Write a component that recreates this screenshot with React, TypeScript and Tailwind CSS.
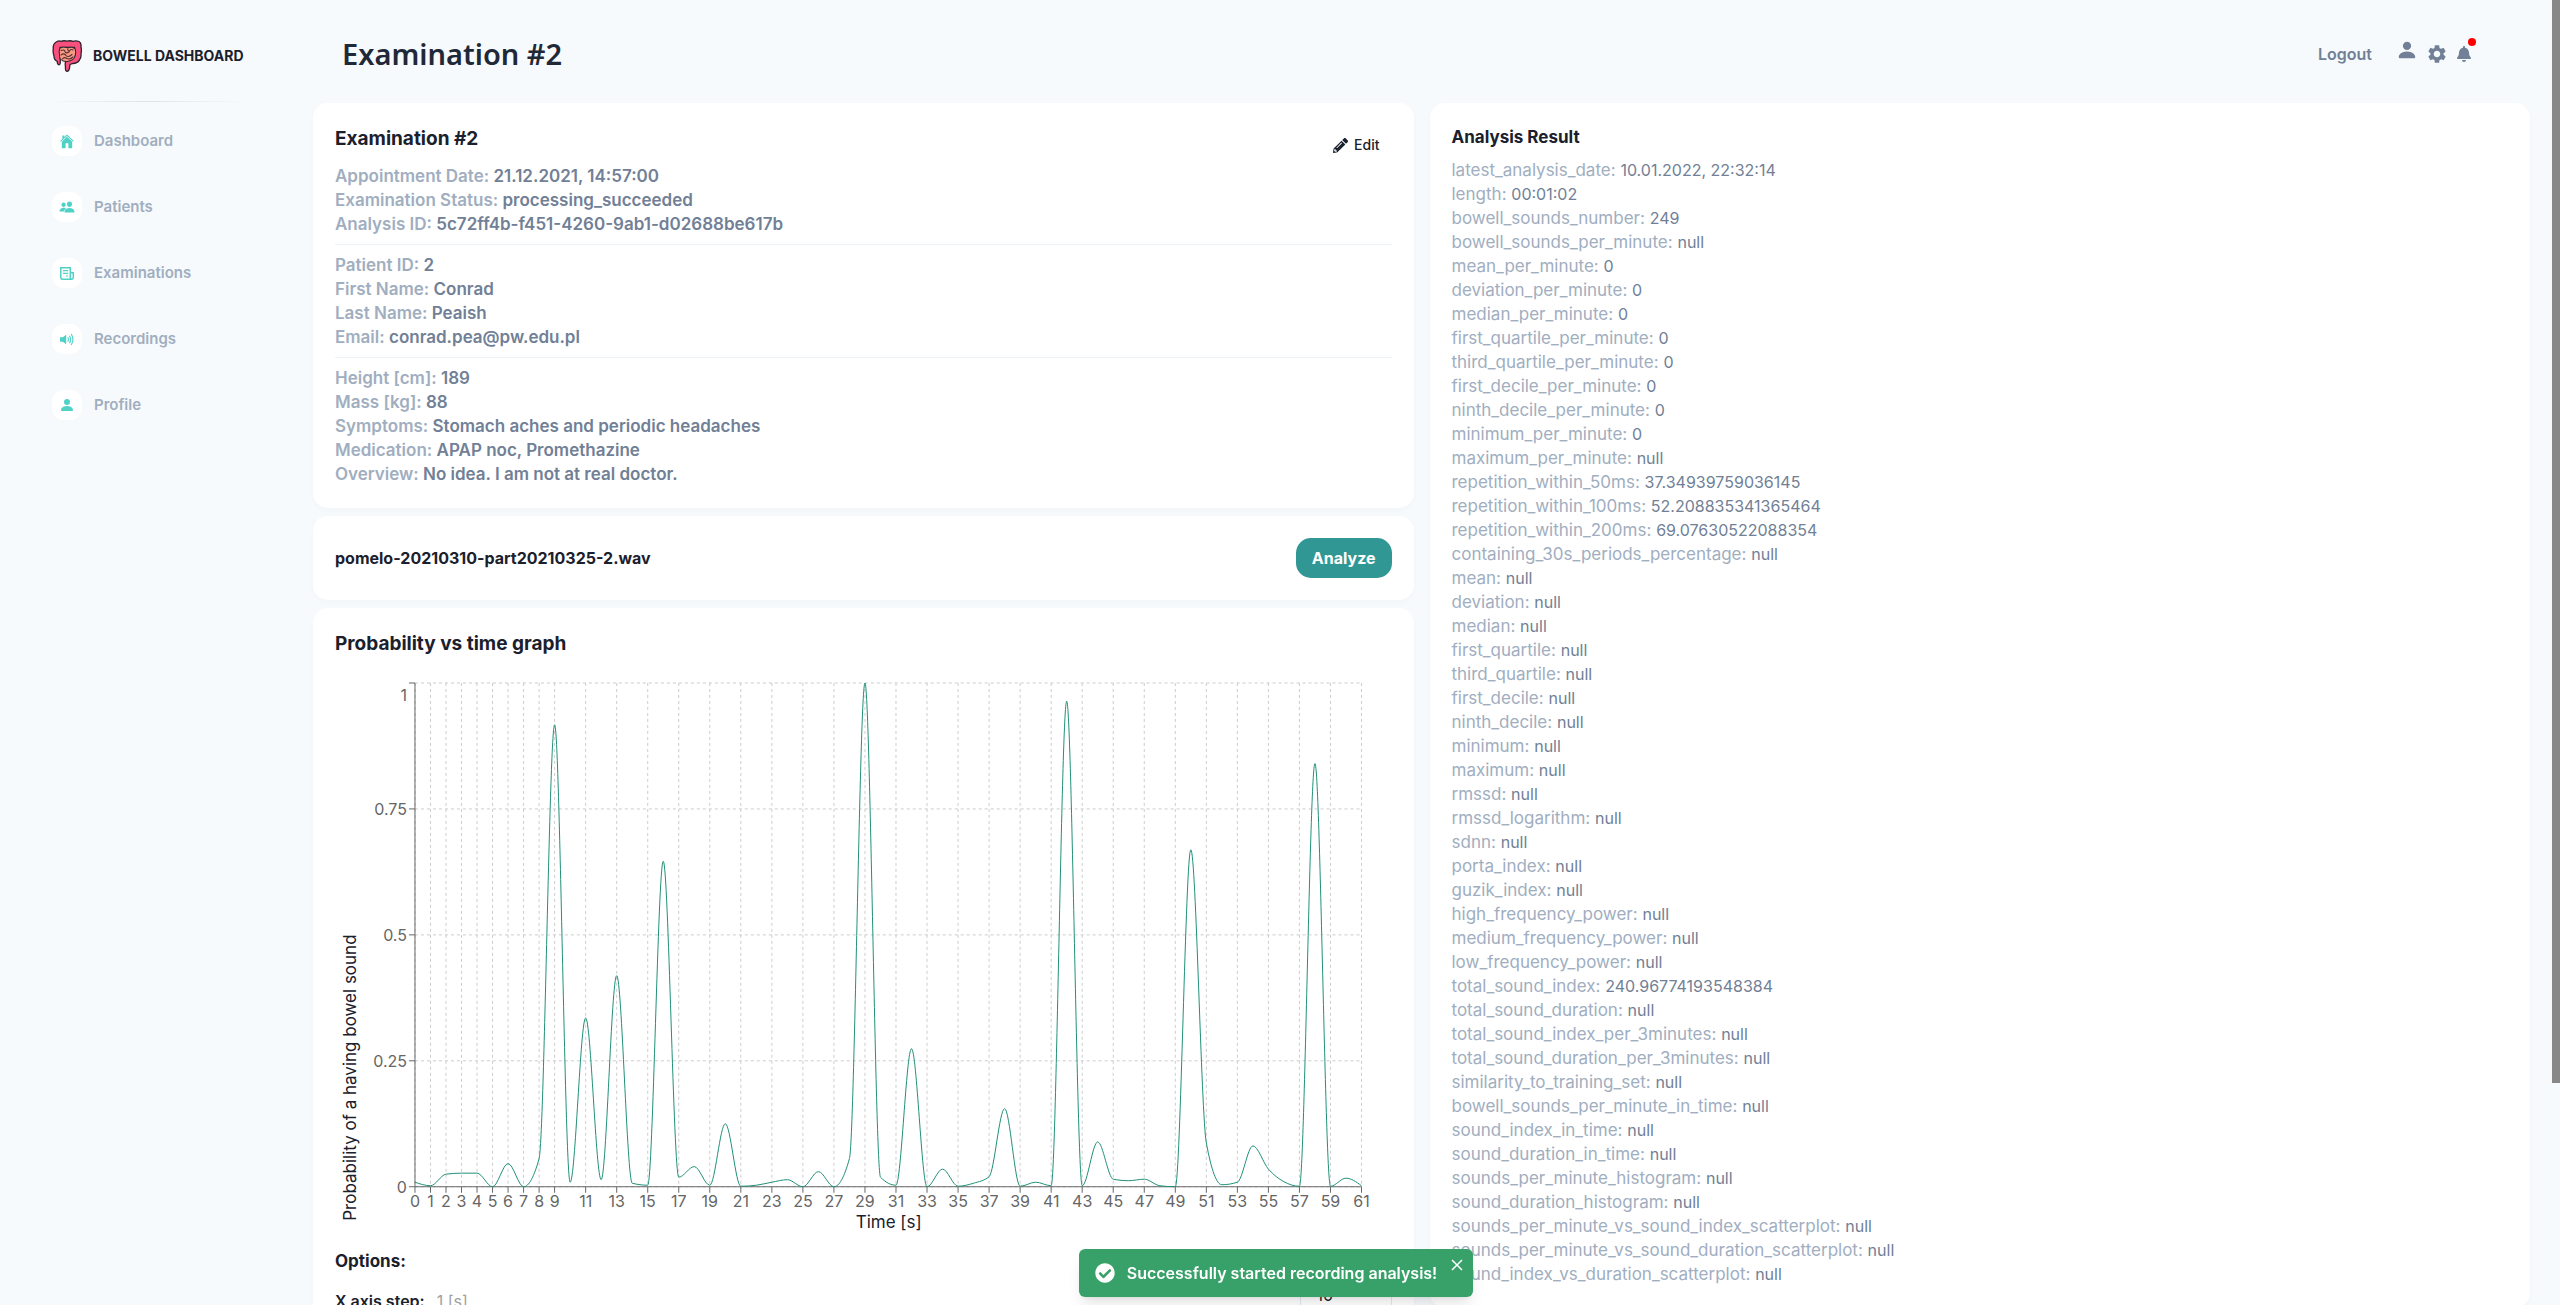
import React from "react";
import { BsFillPersonFill } from "react-icons/bs";
import { IoPeople } from "react-icons/io5";
import { MdSettings } from "react-icons/md";
import { FaBell, FaPencilAlt, FaCheckCircle, FaChevronDown } from "react-icons/fa";

const SERIES = [
  0.009, 0.002, 0.025, 0.027, 0.027, 0, 0.046, 0, 0.056, 0.917, 0.009, 0.335, 0.014, 0.419, 0.007, 0.003,
  0.646, 0.019, 0.04, 0.003, 0.125, 0.001, 0.003, 0.009, 0.014, 0, 0.03, 0, 0.056, 1, 0.019, 0.003, 0.274,
  0, 0.035, 0.001, 0.007, 0.02, 0.155, 0.001, 0.009, 0.002, 0.964, 0.002, 0.089, 0.015, 0.012, 0.015,
  0.002, 0, 0.669, 0.087, 0.004, 0.009, 0.081, 0.035, 0.01, 0.001, 0.84, 0.001, 0.017, 0.002,
];

const RESULTS: [string, string][] = [
  ["latest_analysis_date", "10.01.2022, 22:32:14"],
  ["length", "00:01:02"],
  ["bowell_sounds_number", "249"],
  ["bowell_sounds_per_minute", "null"],
  ["mean_per_minute", "0"],
  ["deviation_per_minute", "0"],
  ["median_per_minute", "0"],
  ["first_quartile_per_minute", "0"],
  ["third_quartile_per_minute", "0"],
  ["first_decile_per_minute", "0"],
  ["ninth_decile_per_minute", "0"],
  ["minimum_per_minute", "0"],
  ["maximum_per_minute", "null"],
  ["repetition_within_50ms", "37.34939759036145"],
  ["repetition_within_100ms", "52.208835341365464"],
  ["repetition_within_200ms", "69.07630522088354"],
  ["containing_30s_periods_percentage", "null"],
  ["mean", "null"],
  ["deviation", "null"],
  ["median", "null"],
  ["first_quartile", "null"],
  ["third_quartile", "null"],
  ["first_decile", "null"],
  ["ninth_decile", "null"],
  ["minimum", "null"],
  ["maximum", "null"],
  ["rmssd", "null"],
  ["rmssd_logarithm", "null"],
  ["sdnn", "null"],
  ["porta_index", "null"],
  ["guzik_index", "null"],
  ["high_frequency_power", "null"],
  ["medium_frequency_power", "null"],
  ["low_frequency_power", "null"],
  ["total_sound_index", "240.96774193548384"],
  ["total_sound_duration", "null"],
  ["total_sound_index_per_3minutes", "null"],
  ["total_sound_duration_per_3minutes", "null"],
  ["similarity_to_training_set", "null"],
  ["bowell_sounds_per_minute_in_time", "null"],
  ["sound_index_in_time", "null"],
  ["sound_duration_in_time", "null"],
  ["sounds_per_minute_histogram", "null"],
  ["sound_duration_histogram", "null"],
  ["sounds_per_minute_vs_sound_index_scatterplot", "null"],
  ["sounds_per_minute_vs_sound_duration_scatterplot", "null"],
  ["sound_index_vs_duration_scatterplot", "null"],
];

const DETAILS: [string, string][][] = [
  [
    ["Appointment Date", "21.12.2021, 14:57:00"],
    ["Examination Status", "processing_succeeded"],
    ["Analysis ID", "5c72ff4b-f451-4260-9ab1-d02688be617b"],
  ],
  [
    ["Patient ID", "2"],
    ["First Name", "Conrad"],
    ["Last Name", "Peaish"],
    ["Email", "conrad.pea@pw.edu.pl"],
  ],
  [
    ["Height [cm]", "189"],
    ["Mass [kg]", "88"],
    ["Symptoms", "Stomach aches and periodic headaches"],
    ["Medication", "APAP noc, Promethazine"],
    ["Overview", "No idea. I am not at real doctor."],
  ],
];

/* Monotone cubic interpolation through evenly spaced points. */
function monotonePath(points: [number, number][]) {
  const n = points.length;
  const slope = (i: number) => (points[i + 1][1] - points[i][1]) / (points[i + 1][0] - points[i][0]);
  const t: number[] = points.map((_, i) => {
    if (i === 0 || i === n - 1) return 0;
    const a = slope(i - 1);
    const b = slope(i);
    return (Math.sign(a) + Math.sign(b)) * Math.min(Math.abs(a), Math.abs(b), 0.25 * Math.abs(a + b)) || 0;
  });
  t[0] = (3 * slope(0) - t[1]) / 2;
  t[n - 1] = (3 * slope(n - 2) - t[n - 2]) / 2;
  let d = `M${points[0][0]},${points[0][1]}`;
  for (let i = 0; i < n - 1; i++) {
    const [x0, y0] = points[i];
    const [x1, y1] = points[i + 1];
    const h = (x1 - x0) / 3;
    d += `C${x0 + h},${y0 + h * t[i]} ${x1 - h},${y1 - h * t[i + 1]} ${x1},${y1}`;
  }
  return d;
}

function Chart() {
  const left = 80;
  const right = 1027;
  const top = 14;
  const bottom = 518;
  const x = (v: number) => left + ((right - left) * v) / 61;
  const y = (v: number) => bottom - (bottom - top) * v;
  const xTicks = SERIES.map((_, i) => i).filter((i) => i < 10 || i % 2 === 1);
  const yTicks = [0, 0.25, 0.5, 0.75, 1];
  return (
    <svg viewBox="0 0 1057 570" className="block w-full" role="img" aria-label="Probability vs time graph">
      <g stroke="#ccc" strokeDasharray="3 3">
        {yTicks.map((v) => (
          <line key={v} x1={left} x2={right} y1={y(v)} y2={y(v)} />
        ))}
        {xTicks.map((v) => (
          <line key={v} x1={x(v)} x2={x(v)} y1={top} y2={bottom} />
        ))}
      </g>
      <g stroke="#666">
        <line x1={left} x2={right} y1={bottom} y2={bottom} />
        <line x1={left} x2={left} y1={top} y2={bottom} />
        {yTicks.map((v) => (
          <line key={v} x1={left - 6} x2={left} y1={y(v)} y2={y(v)} />
        ))}
        {xTicks.map((v) => (
          <line key={v} x1={x(v)} x2={x(v)} y1={bottom} y2={bottom + 6} />
        ))}
      </g>
      <g fill="#666" fontSize="16">
        {yTicks.map((v) => (
          <text key={v} x={left - 8} y={v === 1 ? 32 : y(v) + 6} textAnchor="end">
            {v}
          </text>
        ))}
        {xTicks.map((v) => (
          <text key={v} x={x(v)} y={bottom + 20} textAnchor="middle">
            {v}
          </text>
        ))}
      </g>
      <text x="554" y="559" fontSize="17" textAnchor="middle" fill="#1a202c">
        Time [s]
      </text>
      <text transform="translate(21 552) rotate(-90)" fontSize="17" fill="#1a202c">
        Probability of a having bowel sound
      </text>
      <path d={monotonePath(SERIES.map((v, i) => [x(i), y(v)]))} fill="none" stroke="#1f9077" />
    </svg>
  );
}

function Logo() {
  return (
    <svg viewBox="0 0 30 32" className="h-8 w-[30px]" aria-hidden="true">
      <path
        d="M5 1.500Q7 .5 9 1.300Q12 .3 15 1.200Q18 .3 21 1.300Q24 .4 27 1.500Q29.600 3 28.900 6.500Q29.900 10 29 13.500Q29.500 17 27.500 20Q25 23.500 21 23.500L18 24.500L17.500 28Q17 31.400 15 31.400Q13 31 13.500 27.500L13.200 24.500Q13 20.500 16.500 19.500L21 18Q23.300 17 23 13.500L22.500 7.500L8 7.500Q7.500 12 8 16.500L8.300 21Q8.500 24.500 7 24.800Q5.200 24.500 5.300 21.500Q2 20 2 16Q.6 12 1.300 9Q.5 4 5 1.500Z"
        fill="#fb4f7d"
        stroke="#2b2430"
        strokeWidth="1.300"
      />
      <path
        d="M8 8Q11 6.500 15 7.500Q20 6.500 23 8.500Q24.500 12 23 16Q22.500 19.500 19 20.500Q15 22.500 11 21Q7 19 7.500 14.500Q6.500 11 8 8Z"
        fill="#f79c83"
        stroke="#2b2430"
      />
      <path
        d="M9 10.500Q12 9 13 11.500Q14 14 17 12Q18 8.500 21 10M9 15Q12 12.500 14 15.500Q16 18 20 14.500M10.500 19Q12 16.500 15 18.500Q18 20 21 17M16 8.500Q15 10 17 11"
        fill="none"
        stroke="#5b2f35"
        strokeWidth="1.100"
        strokeLinecap="round"
      />
    </svg>
  );
}

function HomeIcon() {
  return (
    <svg viewBox="0 0 14 15" className="h-[15px] w-[14px]" fill="currentColor" aria-hidden="true">
      <path d="M7 .4 4.300 2.900V1.400H2.400V4.700L.2 6.900l.7.8L7 2l6.100 5.700.7-.8Z" />
      <path d="M7 2.800 1.800 7.700V14.200H5.600V9.300H8.400V14.200H12.200V7.700Z" />
    </svg>
  );
}

function ReportIcon() {
  return (
    <svg viewBox="0 0 14 13" className="h-[13px] w-[14px]" fill="none" stroke="currentColor" aria-hidden="true">
      <path d="M10.300 12.200H2.300Q.8 12.200.8 10.700V.8H10.300V10.700Q10.300 12.200 11.700 12.200Q13.300 12.200 13.300 10.700V5.800H10.300" strokeWidth="1.500" />
      <path d="M3 3.700H8.200M3 6.300H8.200M6 9H8.200" strokeWidth="1.200" />
    </svg>
  );
}

function SpeakerIcon() {
  return (
    <svg viewBox="0 0 14 13" className="h-[13px] w-[14px]" fill="none" stroke="currentColor" aria-hidden="true">
      <path d="M0 4.200H2.800L6.200 1.800V11.200L2.800 8.800H0Z" fill="currentColor" stroke="none" />
      <path d="M7.800 4.300Q9 6.500 7.800 8.700M9.500 2.700Q11.600 6.500 9.500 10.300M11.200 1Q14.600 6.500 11.200 12" strokeWidth="1.100" />
    </svg>
  );
}

const NAV = [
  { label: "Dashboard", icon: <HomeIcon /> },
  { label: "Patients", icon: <IoPeople className="size-4" /> },
  { label: "Examinations", icon: <ReportIcon /> },
  { label: "Recordings", icon: <SpeakerIcon /> },
  { label: "Profile", icon: <BsFillPersonFill className="size-4" /> },
];

const CARD = "rounded-[15px] bg-white p-[22px] shadow-[0_3px_6px_rgba(0,0,0,0.02)]";

function Field({ name, value }: { name: string; value: string }) {
  return (
    <p className="text-[17px]/6 text-[#a0aec0]">
      {name}: <span className="text-[#718096]">{value}</span>
    </p>
  );
}

function Result({ name, value }: { name: string; value: string }) {
  return (
    <p className="text-[17px]/6 text-[#a0aec0]">
      {name}: <span className="text-base/6 text-[#718096]">{value}</span>
    </p>
  );
}

export default function App() {
  return (
    <div className="flex h-screen overflow-hidden bg-[#f7fafc] font-['Inter',sans-serif] text-base text-[#1a202c]">
      <aside className="w-[313px] shrink-0 pl-[52px] pt-10">
        <a href="#" className="flex h-8 items-center gap-[11px] text-sm font-bold">
          <Logo />
          BOWELL DASHBOARD
        </a>
        <div className="-ml-2 mt-[29px] h-px w-[206px] bg-linear-to-r from-transparent via-[#dfe3e8] to-transparent" />
        <nav className="mt-6 flex flex-col gap-9">
          {NAV.map(({ label, icon }) => (
            <a key={label} href="#" className="flex items-center gap-3 text-[15px] font-semibold text-[#a0aec0]">
              <span className="flex size-[30px] items-center justify-center rounded-xl bg-white text-[#4fd1c5]">
                {icon}
              </span>
              {label}
            </a>
          ))}
        </nav>
      </aside>

      <div className="flex min-w-0 flex-1 flex-col pr-[30px]">
        <header className="flex h-[103px] shrink-0 items-center justify-between pl-[29px] pr-[58px] pt-1">
          <h1 className="font-['Noto_Sans',sans-serif] text-[29px] font-semibold text-[#1f2937]">
            Examination #2
          </h1>
          <div className="flex items-center text-[#718096]">
            <button className="font-semibold">Logout</button>
            <button aria-label="Profile" className="ml-6 pb-2">
              <BsFillPersonFill className="size-[22px]" />
            </button>
            <button aria-label="Settings" className="ml-2">
              <MdSettings className="size-[22px]" />
            </button>
            <button aria-label="Notifications" className="relative ml-2">
              <FaBell className="size-4" />
              <span className="absolute -right-1 -top-2 size-2 rounded-full bg-[#ff0000]" />
            </button>
          </div>
        </header>

        <main className="grid grid-cols-2 items-start gap-4">
          <div className="flex min-w-0 flex-col gap-2">
            <section className={CARD}>
              <div className="flex justify-between">
                <h2 className="mb-3 text-[19px]/[27px] font-bold">Examination #2</h2>
                <button className="mr-3 mt-2 flex h-6 items-center gap-1.5 text-sm font-medium">
                  <FaPencilAlt className="size-[15px]" />
                  Edit
                </button>
              </div>
              {DETAILS.map((group, i) => (
                <div
                  key={i}
                  className={i ? "mt-2 border-t border-[#edf2f7] pt-2 font-semibold" : "font-semibold"}
                >
                  {group.map(([name, value]) => (
                    <Field key={name} name={name} value={value} />
                  ))}
                </div>
              ))}
            </section>

            <section className={`${CARD} flex items-center justify-between`}>
              <h2 className="font-bold">pomelo-20210310-part20210325-2.wav</h2>
              <button className="h-10 rounded-[15px] bg-[#319795] px-4 font-bold text-white">Analyze</button>
            </section>

            <section className={CARD}>
              <h2 className="mb-3 text-[19px]/[27px] font-bold">Probability vs time graph</h2>
              <Chart />
              <h3 className="mt-2.5 text-[17px]/6 font-bold">Options:</h3>
              <div className="flex items-start justify-between">
                <label htmlFor="x-step" className="pt-4 text-base/6 font-semibold">
                  X axis step: <span className="pl-2 font-normal text-[#a0a0a0]">1 [s]</span>
                </label>
                <div className="relative">
                  <select
                    id="x-step"
                    defaultValue="10"
                    className="h-11 w-[92px] appearance-none rounded-md border border-[#e2e8f0] bg-white pl-4 text-base"
                  >
                    <option value="10">10</option>
                    <option value="15">15</option>
                  </select>
                  <FaChevronDown className="pointer-events-none absolute right-3 top-4 size-2" />
                </div>
              </div>
            </section>
          </div>

          <section className={CARD}>
            <h2 className="mb-[9px] text-[17px]/6 font-bold">Analysis Result</h2>
            {RESULTS.map(([name, value]) => (
              <Result key={name} name={name} value={value} />
            ))}
          </section>
        </main>
      </div>

      <div className="fixed right-0 top-0 h-[83%] w-2 bg-[#888]" />

      <div className="fixed inset-x-0 bottom-2 flex justify-center pr-2">
        <div
          role="status"
          className="relative flex h-12 items-center gap-3 rounded-md bg-[#38a169] pl-4 pr-9 font-semibold text-white shadow-lg"
        >
          <FaCheckCircle className="size-5" />
          Successfully started recording analysis!
          <button aria-label="Close" className="absolute right-[10px] top-[10px]">
            <svg viewBox="0 0 12 12" className="size-3" fill="none" stroke="currentColor" strokeWidth="1.500">
              <path d="M1 1 11 11M11 1 1 11" />
            </svg>
          </button>
        </div>
      </div>
    </div>
  );
}
